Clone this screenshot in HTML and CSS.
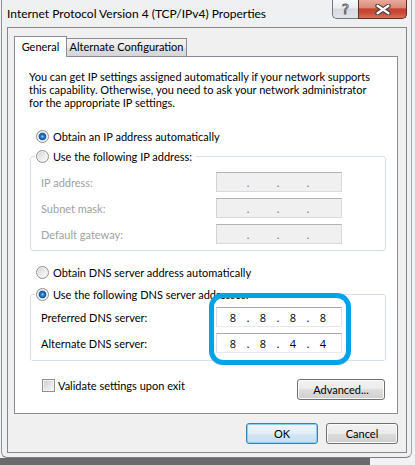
FILE: index.html
```html
<!DOCTYPE html>
<html lang="en">
<head>
<meta charset="utf-8">
<title>Internet Protocol Version 4 (TCP/IPv4) Properties</title>
<link rel="stylesheet" href="styles.css">
</head>
<body>
<div class="window">
  <div class="titlebar">
    <div class="title">Internet Protocol Version 4 (TCP/IPv4) Properties</div>
    <div class="caption">
      <div class="cap-btn help"><span class="q">?</span></div>
      <div class="cap-btn close">
        <svg width="16" height="11" viewBox="0 0 16 11"><path d="M2.5 1.8 L13.5 9.2 M13.5 1.8 L2.5 9.2" stroke="#4b3b3b" stroke-width="4.4" stroke-linecap="round"/><path d="M2.5 1.8 L13.5 9.2 M13.5 1.8 L2.5 9.2" stroke="#ffffff" stroke-width="2.3" stroke-linecap="round"/></svg>
      </div>
    </div>
  </div>
  <div class="client">
    <div class="tabs">
      <div class="tab active">General</div>
      <div class="tab">Alternate Configuration</div>
    </div>
    <div class="panel">
      <p class="intro">You can get IP settings assigned automatically if your network supports<br>this capability. Otherwise, you need to ask your network administrator<br>for the appropriate IP settings.</p>

      <div class="radio-row r-ip-auto"><span class="radio checked"></span><span>Obtain an IP address automatically</span></div>

      <div class="group g-ip">
        <div class="legend"><span class="radio"></span><span>Use the following IP address:</span></div>
        <div class="fields f-ip">
          <span class="lbl disabled">IP address:</span>
          <div class="ipbox off"><span class="seg"></span><span class="dot">.</span><span class="seg"></span><span class="dot">.</span><span class="seg"></span><span class="dot">.</span><span class="seg"></span></div>
          <span class="lbl disabled">Subnet mask:</span>
          <div class="ipbox off"><span class="seg"></span><span class="dot">.</span><span class="seg"></span><span class="dot">.</span><span class="seg"></span><span class="dot">.</span><span class="seg"></span></div>
          <span class="lbl disabled">Default gateway:</span>
          <div class="ipbox off"><span class="seg"></span><span class="dot">.</span><span class="seg"></span><span class="dot">.</span><span class="seg"></span><span class="dot">.</span><span class="seg"></span></div>
        </div>
      </div>

      <div class="radio-row r-dns-auto"><span class="radio"></span><span>Obtain DNS server address automatically</span></div>

      <div class="group g-dns">
        <div class="legend"><span class="radio checked"></span><span>Use the following DNS server addresses:</span></div>
        <div class="fields f-dns">
          <span class="lbl">Preferred DNS server:</span>
          <div class="ipbox on"><span class="seg">8</span><span class="dot">.</span><span class="seg">8</span><span class="dot">.</span><span class="seg">8</span><span class="dot">.</span><span class="seg">8</span></div>
          <span class="lbl">Alternate DNS server:</span>
          <div class="ipbox on"><span class="seg">8</span><span class="dot">.</span><span class="seg">8</span><span class="dot">.</span><span class="seg">4</span><span class="dot">.</span><span class="seg">4</span></div>
        </div>
        <div class="annot"></div>
      </div>

      <div class="bottom-row">
        <div class="check"><span class="checkbox"></span><span>Validate settings upon exit</span></div>
        <div class="btn adv">Advanced...</div>
      </div>
    </div>
    <div class="dlg-buttons">
      <div class="btn default">OK</div>
      <div class="btn">Cancel</div>
    </div>
  </div>
</div>
</body>
</html>
```

FILE: styles.css
```css
* { box-sizing: border-box; }

html {
  background: linear-gradient(#6a6a6a, #6a6a6a) 0 458px / 370px 7px no-repeat #f2f2f2;
}

body {
  margin: 0;
  font-family: Lato, "Open Sans", sans-serif;
  font-size: 11px;
  color: #000;
}

.window {
  margin-left: 1px;
  width: 411px;
  height: 458px;
  background: #eef0f2;
  border-left: 1px solid #8d9095;
  border-right: 1px solid #a2a5a9;
  border-bottom: 1px solid #7b7e83;
  border-radius: 0 0 6px 6px;
}

/* title bar */
.titlebar {
  display: flex;
  height: 27px;
}
.title {
  padding: 7px 0 0 5px;
  font-size: 12px;
  line-height: 14px;
  white-space: nowrap;
}
.caption {
  margin-left: auto;
  margin-right: 4px;
  display: flex;
  height: 19px;
}
.cap-btn {
  height: 19px;
  display: flex;
  align-items: center;
  justify-content: center;
  border: 1px solid;
  border-top: none;
}
.help {
  width: 26px;
  border-color: #707782;
  border-right: none;
  border-radius: 0 0 0 5px;
  background: linear-gradient(#f7f8fa 0, #eaecef 45%, #d6d9dd 50%, #e2e4e7 100%);
}
.q {
  font-family: "DejaVu Sans", sans-serif;
  font-size: 14px;
  line-height: 14px;
  color: #f6f6f6;
  -webkit-text-stroke: 0.9px #5d626a;
}
.close {
  width: 49px;
  border-color: #5e2d27;
  border-radius: 0 0 5px 0;
  background: linear-gradient(#eaa999 0, #d98b7b 42%, #c3432f 50%, #c84a36 70%, #d9705d 100%);
}

/* client */
.client {
  margin-left: 5px;
  width: 400px;
  height: 426px;
  border: 1px solid #858585;
  background: #f0f0f0;
  padding: 8px 0 0 6px;
}

.tabs {
  display: flex;
  align-items: flex-end;
  height: 20px;
  position: relative;
  z-index: 1;
}
.tab {
  height: 18px;
  width: 120px;
  border: 1px solid #898c95;
  border-bottom: none;
  border-left: none;
  text-align: center;
  line-height: 16px;
  white-space: nowrap;
  background: linear-gradient(#f3f3f3 0, #ebebeb 50%, #dfdfdf 50%, #d6d6d6 100%);
}
.tab.active {
  width: 53px;
  height: 21px;
  margin-bottom: -1px;
  border-left: 1px solid #898c95;
  background: #fff;
  line-height: 19px;
}

.panel {
  width: 384px;
  height: 358px;
  border: 1px solid #898c95;
  background: #fff;
  padding: 13px 11px 0 14px;
}

.intro {
  margin: 0;
  line-height: 13px;
  white-space: nowrap;
}

.radio-row {
  display: flex;
  align-items: center;
  gap: 4px;
  height: 14px;
  margin-left: 7px;
  white-space: nowrap;
}
.r-ip-auto { margin-top: 20px; }
.r-dns-auto { margin-top: 14px; }

.radio {
  flex: none;
  width: 13px;
  height: 13px;
  border-radius: 50%;
  border: 1px solid #8e8f8f;
  background: linear-gradient(135deg, #cfcfcf 0, #ececec 55%, #fbfbfb 100%);
  box-shadow: inset 0 0 0 1px #f3f3f3;
}
.radio.checked {
  background:
    radial-gradient(circle at 50% 50%, #8fd6ff 0, #2b86d8 1.4px, #144f9c 3.4px, rgba(20, 79, 156, 0) 4.2px),
    linear-gradient(135deg, #cfcfcf 0, #ececec 55%, #fbfbfb 100%);
}

.group {
  position: relative;
  width: 356px;
  margin-left: 1px;
  border: 1px solid #d5dfe5;
  border-radius: 3px;
  padding-left: 10px;
}
.g-ip { margin-top: 13px; padding-bottom: 6px; }
.g-dns { margin-top: 15px; padding-bottom: 7px; }

.legend {
  display: flex;
  align-items: center;
  gap: 4px;
  width: fit-content;
  height: 14px;
  margin: -8px 0 0 -6px;
  padding: 0 4px 0 1px;
  background: #fff;
  white-space: nowrap;
}

.fields {
  display: grid;
  grid-template-columns: 175px 126px;
  grid-auto-rows: 20px;
  row-gap: 6px;
  align-items: center;
}
.f-ip { margin-top: 9px; }
.f-dns { margin-top: 6px; }

.lbl { white-space: nowrap; line-height: 13px; }
.lbl.disabled { color: #a0a0a0; }

.ipbox {
  display: flex;
  align-items: center;
  height: 20px;
  width: 126px;
  padding-left: 2px;
  border: 1px solid;
}
.ipbox.off {
  background: #f0f0f0;
  border-color: #b3b3b3 #dadada #dadada #d2d2d2;
}
.ipbox.on {
  background: #fff;
  border-color: #a5a7ad #dfe3e8 #e3e9ef #dcdde4;
}
.seg {
  width: 28px;
  text-align: center;
  line-height: 13px;
  font-family: "Open Sans", sans-serif;
}
.dot {
  width: 2px;
  display: flex;
  justify-content: center;
  line-height: 13px;
}
.off .dot { color: #6c6c80; }

.annot {
  position: absolute;
  left: 178px;
  top: -2px;
  width: 142px;
  height: 72px;
  border: 5px solid #00a2e8;
  border-radius: 14px;
}

.bottom-row {
  display: flex;
  align-items: flex-start;
  width: 356px;
  margin: 18px 0 0 1px;
}
.check {
  display: flex;
  align-items: center;
  gap: 3px;
  height: 13px;
  margin-left: 12px;
  white-space: nowrap;
}
.checkbox {
  flex: none;
  width: 13px;
  height: 13px;
  border: 1px solid #8e8f8f;
  background: linear-gradient(135deg, #cbcbcb 0, #e6e6e6 55%, #f7f7f7 100%);
  box-shadow: inset 0 0 0 1px #f4f4f4;
}

.btn {
  display: flex;
  align-items: center;
  justify-content: center;
  width: 72px;
  height: 21px;
  border: 1px solid #707070;
  border-radius: 3px;
  background: linear-gradient(#f2f2f2 0, #ebebeb 50%, #dddddd 50%, #cfcfcf 100%);
  box-shadow: inset 0 0 0 1px #fbfbfb;
  line-height: 13px;
  white-space: nowrap;
}
.btn.adv {
  width: 88px;
  margin: 0 1px 0 auto;
}
.btn.default {
  border-color: #3c7fb1;
  background: linear-gradient(#edf5fb 0, #e2eef8 50%, #d3e6f4 50%, #c8dff0 100%);
  box-shadow: inset 0 0 0 1px #8ccff2;
}

.dlg-buttons {
  display: flex;
  justify-content: flex-end;
  gap: 8px;
  width: 384px;
  margin-top: 9px;
}
```
